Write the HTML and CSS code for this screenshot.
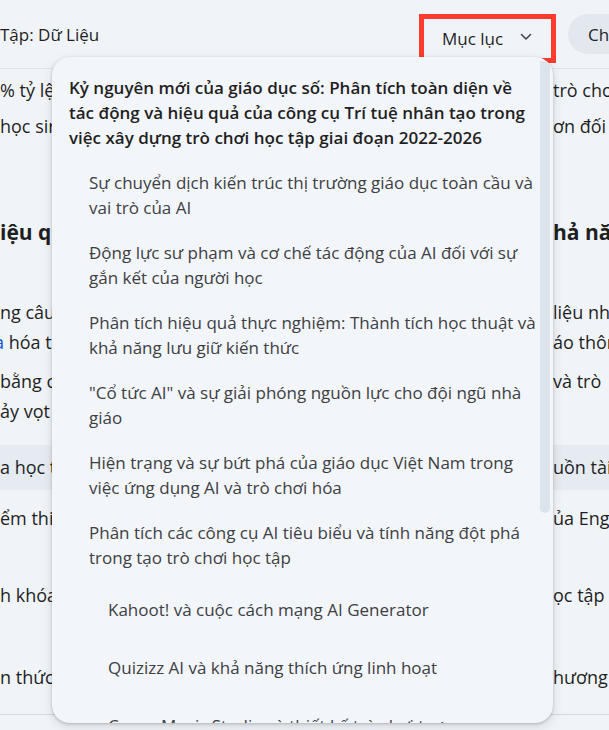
FILE: index.html
```html
<!DOCTYPE html>
<html lang="vi">
<head>
    <meta charset="UTF-8">
    <meta name="viewport" content="width=device-width, initial-scale=1.0">
    <title>Tập: Dữ Liệu</title>
    <link rel="stylesheet" href="styles.css">
</head>
<body>
    <div class="page">
        <!-- Thanh tiêu đề -->
        <header class="topbar">
            <div class="doc-title">Tập: Dữ Liệu</div>
            <div class="highlight">
                <button class="toc-toggle">
                    Mục lục
                    <svg class="chevron" width="12" height="8" viewBox="0 0 12 8"><path d="M1.5 1.5 L6 6 L10.5 1.5" fill="none" stroke="#444746" stroke-width="1.6" stroke-linecap="round" stroke-linejoin="round"/></svg>
                </button>
            </div>
            <div class="pill-wrap">
                <button class="pill">Chia sẻ</button>
            </div>
        </header>

        <!-- Nội dung tài liệu (phía sau menu) -->
        <main class="doc">
            <div class="para para-top">
                <div class="line"><span class="l">% tỷ lệ học sinh tham gia tích cực vào</span><span class="r">trò chơi</span></div>
                <div class="line"><span class="l">học sinh trong các lớp học thử nghiệm</span><span class="r">ơn đối với</span></div>
            </div>

            <h2 class="heading line"><span class="l">iệu quả thực nghiệm</span><span class="r">hả năng</span></h2>

            <div class="para para-main">
                <div class="line"><span class="l">ng câu hỏi được tạo bởi AI</span><span class="r"> liệu như</span></div>
                <div class="line"><span class="l"><span class="link">a</span> hóa tài liệu giảng dạy</span><span class="r">áo thông</span></div>
                <div class="line gap"><span class="l"> bằng chứng cho thấy</span><span class="r"> và trò</span></div>
                <div class="line"><span class="l">ảy vọt trong kết quả</span><span class="r"></span></div>
            </div>

            <div class="table">
                <div class="cell head">a học tập</div>
                <div class="cell head right">uồn tài liệu</div>
                <div class="cell">ểm thi trung bình</div>
                <div class="cell right">ủa Engageli</div>
                <div class="cell">h khóa học</div>
                <div class="cell right">ọc tập</div>
                <div class="cell">n thức</div>
                <div class="cell right">hương pháp</div>
            </div>

            <p class="tail">Tổng hợp dữ liệu cho thấy những thay đổi rõ rệt trong cách học</p>
        </main>

        <!-- Menu mục lục -->
        <nav class="toc-menu">
            <div class="toc-list">
                <a class="toc-item lv1">Kỷ nguyên mới của giáo dục số: Phân tích toàn diện về tác động và hiệu quả của công cụ Trí tuệ nhân tạo trong việc xây dựng trò chơi học tập giai đoạn 2022-2026</a>
                <a class="toc-item lv2">Sự chuyển dịch kiến trúc thị trường giáo dục toàn cầu và vai trò của AI</a>
                <a class="toc-item lv2">Động lực sư phạm và cơ chế tác động của AI đối với sự gắn kết của người học</a>
                <a class="toc-item lv2">Phân tích hiệu quả thực nghiệm: Thành tích học thuật và khả năng lưu giữ kiến thức</a>
                <a class="toc-item lv2">"Cổ tức AI" và sự giải phóng nguồn lực cho đội ngũ nhà giáo</a>
                <a class="toc-item lv2">Hiện trạng và sự bứt phá của giáo dục Việt Nam trong việc ứng dụng AI và trò chơi hóa</a>
                <a class="toc-item lv2">Phân tích các công cụ AI tiêu biểu và tính năng đột phá trong tạo trò chơi học tập</a>
                <a class="toc-item lv3">Kahoot! và cuộc cách mạng AI Generator</a>
                <a class="toc-item lv3">Quizizz AI và khả năng thích ứng linh hoạt</a>
                <a class="toc-item lv3">Canva Magic Studio và thiết kế trò chơi trực quan</a>
            </div>
            <div class="scroll-thumb"></div>
        </nav>
    </div>
</body>
</html>
```

FILE: styles.css
```css
body {
    margin: 0;
    padding: 0;
    background-color: #f0f4f9;
    font-family: 'Open Sans', 'Liberation Sans', sans-serif;
    color: #1f1f1f;
}

.page {
    position: relative;
    width: 609px;
    height: 730px;
    overflow: hidden;
}

/* Thanh tiêu đề */
.topbar {
    display: grid;
    grid-template-columns: 1fr 137px 53px;
    height: 68px;
    border-bottom: 1px solid #dde3ea;
}

.doc-title {
    align-self: center;
    font-size: 17px;
    white-space: nowrap;
}

.highlight {
    align-self: start;
    margin-top: 14px;
    height: 49px;
    border: 5px solid #fa3b2e;
    box-sizing: border-box;
    display: flex;
    align-items: flex-start;
}

.toc-toggle {
    display: flex;
    align-items: center;
    gap: 17px;
    margin-top: 6px;
    padding: 0 0 0 18px;
    height: 26px;
    background: none;
    border: none;
    font-family: inherit;
    font-size: 17px;
    color: #1f1f1f;
    white-space: nowrap;
}

.chevron {
    margin-top: -2px;
}

.pill-wrap {
    align-self: center;
    padding-left: 12px;
}

.pill {
    height: 40px;
    padding: 0 20px;
    background-color: #e3e8ef;
    border: none;
    border-radius: 20px;
    font-family: inherit;
    font-size: 17px;
    color: #1f1f1f;
    white-space: nowrap;
}

/* Nội dung tài liệu */
.doc {
    font-size: 18px;
}

.line {
    display: flex;
    justify-content: space-between;
    white-space: nowrap;
}

.line .l {
    width: 300px;
    overflow: hidden;
}

.line .r {
    width: 56px;
}

.para-top {
    margin-top: 3px;
    line-height: 36px;
}

.heading {
    margin: 74px 0 0;
    font-size: 21px;
    font-weight: 700;
    line-height: 28px;
}

.para-main {
    margin-top: 51px;
    line-height: 30px;
}

.para-main .gap {
    margin-top: 9px;
}

.link {
    margin-left: -6px;
    color: #0b57d0;
}

.table {
    display: grid;
    grid-template-columns: 1fr 56px;
    grid-template-rows: 45px 77px 82px 65px;
    margin-top: 19px;
    border-bottom: 1px solid #d3d9e1;
}

.cell {
    padding-top: 16px;
    line-height: 24px;
    white-space: nowrap;
}

.cell.head {
    padding-top: 10px;
    background-color: #e6ebf2;
    font-weight: 500;
}

.tail {
    margin: 15px 0 0 60px;
    line-height: 30px;
    white-space: nowrap;
}

/* Menu mục lục */
.toc-menu {
    position: absolute;
    top: 57px;
    left: 52px;
    width: 501px;
    height: 666px;
    overflow: hidden;
    background-color: #f2f5fa;
    border-radius: 18px;
    box-shadow: 0 1px 3px rgba(0, 0, 0, 0.22), 0 4px 10px 2px rgba(0, 0, 0, 0.08);
}

.toc-list {
    display: flex;
    flex-direction: column;
    padding: 8px 14px 0 0;
}

.toc-item {
    display: block;
    padding: 10px 0 10px 37px;
    font-size: 17px;
    line-height: 25px;
    color: #3d4043;
}

.toc-item.lv1 {
    padding-left: 17px;
    font-weight: 600;
    color: #1f1f1f;
}

.toc-item.lv3 {
    padding: 16.5px 0 16.5px 56px;
}

.scroll-thumb {
    position: absolute;
    top: 4px;
    right: 3px;
    width: 10px;
    height: 452px;
    background-color: #dde3ea;
    border-radius: 0 0 5px 5px;
}
```
